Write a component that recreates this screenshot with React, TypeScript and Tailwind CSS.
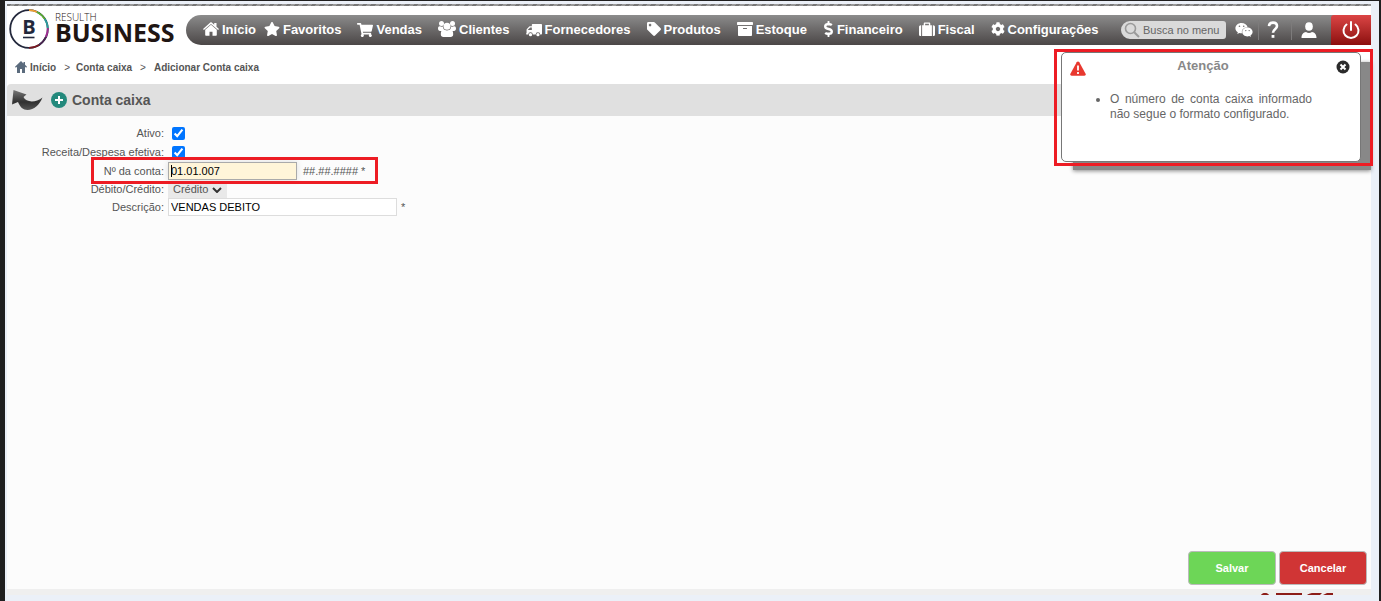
import React from 'react'
import { FaArchive, FaCog, FaDollarSign, FaShoppingCart, FaStar, FaTag, FaWeixin } from 'react-icons/fa'

interface IconProps {
  className?: string
}

const HomeIcon: React.FC<IconProps> = ({ className }) => (
  <svg viewBox="0 0 16 14" fill="currentColor" className={className}>
    <path d="M8 2.800l5.800 5V13c0 .5-.3.800-.8.800H9.500V9.800h-3v4H3c-.5 0-.8-.3-.8-.8V7.800z" />
    <path d="M7.300.6c.4-.4 1-.4 1.400 0l2.500 2.100V1h2.300v3.700L16 6.900l-.9 1.100L8 2 .9 8 0 6.900z" />
  </svg>
)

const ClientsIcon: React.FC<IconProps> = ({ className }) => (
  <svg viewBox="0 0 18 16" fill="currentColor" className={className}>
    <circle cx="3.500" cy="2.600" r="2.500" />
    <circle cx="14.500" cy="2.600" r="2.500" />
    <circle cx="9" cy="5.200" r="3.500" />
    <path d="M0 7.500C0 5.800 1 5 2 5.300c1 .5 2 .5 2.900.1 0 1.300.4 2.400 1.200 3.200L4 10H2C.8 10 0 9 0 7.500zM18 7.500c0-1.700-1-2.500-2-2.200-1 .5-2 .5-2.900.1 0 1.300-.4 2.400-1.200 3.200L14 10h2c1.200 0 2-1 2-2.500z" />
    <path d="M2.800 13.200c0-2.800.9-4.700 2.800-4.700 1 0 1.800.9 3.400.9s2.400-.9 3.400-.9c1.900 0 2.800 1.900 2.800 4.700 0 1.800-1 2.800-2.600 2.800H5.400c-1.600 0-2.600-1-2.600-2.800z" />
  </svg>
)

const TruckIcon: React.FC<IconProps> = ({ className }) => (
  <svg viewBox="0 0 17 14" fill="currentColor" className={className}>
    <path
      fillRule="evenodd"
      d="M7 .5h9.200c.5 0 .8.300.8.800v9.500c0 .6-.3.900-.9.900h-1a2.400 2.400 0 0 0-4.800 0H7.200a2.400 2.400 0 0 0-4.800 0H.7c-.4 0-.7-.3-.7-.7.5-.2.600-.5.600-1V7c0-.6.2-1 .6-1.400l2-2.100c.4-.4.8-.5 1.300-.5H6.200V1.300c0-.5.300-.8.800-.8zM2 7h4.200V4.300H4.500L2 6.800z"
    />
    <circle cx="4.800" cy="12" r="1.700" />
    <circle cx="12.700" cy="12" r="1.700" />
  </svg>
)

const SuitcaseIcon: React.FC<IconProps> = ({ className }) => (
  <svg viewBox="0 0 17 15" fill="currentColor" className={className}>
    <path d="M2.300 3v11.500h-.5C.8 14.500 0 13.700 0 12.700V4.800C0 3.800.8 3 1.800 3zM14.700 3v11.500h.5c1 0 1.800-.8 1.800-1.800V4.800c0-1-.8-1.800-1.800-1.800z" />
    <path fillRule="evenodd" d="M3.300 3H5V1.300C5 .6 5.600 0 6.300 0h4.400c.7 0 1.300.6 1.300 1.300V3h1.700v11.500H3.300zm3.200 0h4V1.500h-4z" />
  </svg>
)

const MENU = [
  { label: 'Início', icon: HomeIcon, iconClass: 'h-[14px] w-4 -mt-0.5' },
  { label: 'Favoritos', icon: FaStar, iconClass: 'h-4 w-4 -ml-2 -mt-0.5' },
  { label: 'Vendas', icon: FaShoppingCart, iconClass: 'h-4 w-4' },
  { label: 'Clientes', icon: ClientsIcon, iconClass: 'h-4 w-[18px] -mt-0.5' },
  { label: 'Fornecedores', icon: TruckIcon, iconClass: 'h-[14px] w-4' },
  { label: 'Produtos', icon: FaTag, iconClass: 'h-[14px] w-[14px] -mt-0.5' },
  { label: 'Estoque', icon: FaArchive, iconClass: 'h-4 w-4 -mt-0.5' },
  { label: 'Financeiro', icon: FaDollarSign, iconClass: 'h-4 w-[11px] -mt-0.5' },
  { label: 'Fiscal', icon: SuitcaseIcon, iconClass: 'h-[15px] w-4 -mt-0.5' },
  { label: 'Configurações', icon: FaCog, iconClass: 'h-[14px] w-[14px] -mt-0.5' },
]

const Logo: React.FC = () => (
  <a href="#" className="flex w-[179px] shrink-0 items-start gap-[6px] pl-0.5 text-[#1f1513]">
    <svg viewBox="0 0 40 40" className="h-10 w-10 shrink-0">
      <g fill="none" strokeWidth="1.800">
        <circle cx="20" cy="20" r="18.800" stroke="#23283c" />
        <path d="M20 1.200A18.800 18.800 0 0 1 28 3" stroke="#f0a030" />
        <path d="M28 3a18.800 18.800 0 0 1 7.800 7" stroke="#5cb531" />
        <path d="M35.800 10a18.800 18.800 0 0 1 3 9" stroke="#2a9fa0" />
        <path d="M38.800 19a18.800 18.800 0 0 1-2 9" stroke="#a02c91" />
        <path d="M36.800 28a18.800 18.800 0 0 1-6.800 8" stroke="#4a2450" />
        <path d="M30 36a18.800 18.800 0 0 1-10 2.800" stroke="#7a1a22" />
      </g>
      <text x="20" y="25" textAnchor="middle" fontFamily="Open Sans, sans-serif" fontWeight="700" fontSize="20" fill="#23283c">
        B
      </text>
      <path d="M14 28.500h11.500" stroke="#23283c" strokeWidth="1.600" />
    </svg>
    <span className="flex flex-col pt-[3px] font-['Open_Sans',sans-serif]">
      <span className="text-[10px] font-light leading-[10px]">RESULTH</span>
      <span className="text-[25px] font-bold leading-5">BUSINESS</span>
    </span>
  </a>
)

const Header: React.FC = () => (
  <header className="flex items-start pt-[3px]">
    <Logo />
    <div className="mt-[6px] flex h-[30px] flex-1 items-center rounded-l-[15px] bg-linear-to-b from-[#8c8c8c] to-[#4b4747] pl-[17px] text-white">
      <nav className="flex flex-1 items-center gap-4">
        {MENU.map(({ label, icon: Icon, iconClass }) => (
          <a key={label} href="#" className="flex items-center gap-[3px] text-[13px] font-bold leading-4">
            <Icon className={iconClass} />
            {label}
          </a>
        ))}
      </nav>
      <label className="flex h-[18px] w-[105px] items-center gap-[3px] rounded-l-[9px] rounded-r-[3px] bg-[#dadada] pl-[3px]">
        <svg viewBox="0 0 16 16" fill="none" stroke="#9a9a9a" className="h-4 w-4 shrink-0">
          <circle cx="6.500" cy="6.500" r="5" strokeWidth="1.600" />
          <path d="M10.200 10.200l4.800 4.800" strokeWidth="2" />
        </svg>
        <input
          type="text"
          aria-label="Busca no menu"
          placeholder="Busca no menu"
          className="w-full min-w-0 bg-transparent text-[11px] placeholder:text-[#666] outline-none"
        />
      </label>
      <button type="button" aria-label="Mensagens" className="flex h-5 w-[33px] items-center justify-center border-r border-[#7d7b7b] pl-1">
        <FaWeixin className="h-[18px] w-[18px]" />
      </button>
      <button type="button" aria-label="Ajuda" className="flex h-5 w-[33px] items-center justify-center border-r border-[#7d7b7b] pr-1">
        <svg viewBox="0 0 12 18" fill="none" stroke="currentColor" className="h-[18px] w-3">
          <path d="M2 5.200C2.200 2.800 3.800 1.600 6 1.600c2.400 0 4 1.400 4 3.500 0 3.200-4 3.200-4 6.700" strokeWidth="2.600" />
          <path d="M4.600 14h2.800v2.800H4.600z" fill="currentColor" stroke="none" />
        </svg>
      </button>
      <button type="button" aria-label="Usuário" className="flex h-5 w-[39px] items-center justify-center pr-[6px]">
        <svg viewBox="0 0 16 16" fill="currentColor" className="h-4 w-4">
          <ellipse cx="8" cy="4.500" rx="3.800" ry="4.300" />
          <path d="M.5 16c0-4 2-5.500 4.500-6 2 1.200 4 1.200 6 0 2.500.5 4.500 2 4.500 6z" />
        </svg>
      </button>
      <button
        type="button"
        aria-label="Sair"
        className="flex h-[30px] w-10 items-center justify-center rounded-tl-[3px] bg-linear-to-b from-[#dc4545] to-[#8c0d0d]"
      >
        <svg viewBox="0 0 18 18" fill="none" stroke="currentColor" strokeWidth="2" strokeLinecap="round" className="h-[18px] w-[18px]">
          <path d="M4.500 3.500a7.500 7.500 0 1 0 9 0" />
          <path d="M9 1v8" />
        </svg>
      </button>
    </div>
  </header>
)

const Breadcrumb: React.FC = () => (
  <nav className="mt-[9px] flex h-[18px] items-center pl-2 text-[10px] font-bold text-[#555]">
    <a href="#" className="flex items-center gap-[3px]">
      <svg viewBox="0 0 12 12" className="h-3 w-3">
        <path d="M6 0L0 5.800l.8.900L2 5.700V12h3V8h2v4h3V5.700l1.200 1 .8-.9L10 3.800V1H8.500v1.400z" fill="#5b6b7d" />
      </svg>
      Início
    </a>
    <span className="ml-2 font-normal">&gt;</span>
    <a href="#" className="ml-[6px]">Conta caixa</a>
    <span className="ml-2 font-normal">&gt;</span>
    <span className="ml-2">Adicionar Conta caixa</span>
  </nav>
)

const TitleBar: React.FC = () => (
  <div className="mt-2 flex h-8 items-center rounded-tl-[4px] bg-[#e0e0e0] pl-[5px]">
    <button type="button" aria-label="Voltar">
      <svg viewBox="0 0 31 22" className="block h-[22px] w-[31px]">
        <defs>
          <linearGradient id="back" x1="0" y1="0" x2="0" y2="1">
            <stop offset="0" stopColor="#777" />
            <stop offset=".6" stopColor="#303030" />
            <stop offset="1" stopColor="#555" />
          </linearGradient>
        </defs>
        <path d="M1.500 1L14.500 5.500 11.500 8c2.500 5.500 12 6 19 .5C27.500 16 22 21 15.500 21c-4.500 0-7.500-3-9.500-8L0 15.500z" fill="url(#back)" />
      </svg>
    </button>
    <svg viewBox="0 0 16 16" className="ml-2 h-4 w-4">
      <circle cx="8" cy="8" r="8" fill="#23897c" />
      <path d="M8 4v8M4 8h8" stroke="#fff" strokeWidth="2" />
    </svg>
    <h1 className="ml-[5px] text-[14px] font-bold text-[#555]">Conta caixa</h1>
  </div>
)

interface FieldProps {
  id: string
  label: string
  children: React.ReactNode
}

const Field: React.FC<FieldProps> = ({ id, label, children }) => (
  <div className="flex items-center gap-1">
    <label htmlFor={id} className="w-[157px] shrink-0 text-right">
      {label}
    </label>
    {children}
  </div>
)

const AccountForm: React.FC = () => (
  <form id="conta" className="grid auto-rows-[18px] gap-y-px pt-2 text-[11px] leading-[13px] text-[#555]">
    <Field id="ativo" label="Ativo:">
      <input id="ativo" type="checkbox" defaultChecked className="ml-1 h-[13px] w-[13px] accent-[#0075ff]" />
    </Field>
    <Field id="efetiva" label="Receita/Despesa efetiva:">
      <input id="efetiva" type="checkbox" defaultChecked className="ml-1 h-[13px] w-[13px] accent-[#0075ff]" />
    </Field>
    <div className="relative">
      <Field id="numero" label="Nº da conta:">
        <span className="relative">
          <input
            id="numero"
            type="text"
            defaultValue="01.01.007"
            className="block h-[18px] w-[129px] border border-[#aaa] bg-[#fff5d9] px-[2px] text-black shadow-[0_0_6px_#ddd] outline-none"
          />
          <span className="absolute left-[3px] top-[3px] h-3 w-px bg-black" />
        </span>
        <span className="ml-[2px]">##.##.#### *</span>
      </Field>
      <div className="pointer-events-none absolute -top-[5px] left-[84px] z-10 h-[27px] w-[287px] border-[3px] border-[#ed1c24]" />
    </div>
    <div className="-mt-px grid auto-rows-[18px]">
      <Field id="tipo" label="Débito/Crédito:">
        <span className="relative">
          <select id="tipo" className="block h-[17px] w-[59px] appearance-none bg-[#e9e9e9] pl-[5px] outline-none">
            <option>Crédito</option>
            <option>Débito</option>
          </select>
          <svg viewBox="0 0 10 6" fill="none" stroke="#333" strokeWidth="2" className="pointer-events-none absolute right-[5px] top-[6px] h-[6px] w-[10px]">
            <path d="M1 1l4 4 4-4" />
          </svg>
        </span>
      </Field>
      <Field id="descricao" label="Descrição:">
        <input
          id="descricao"
          type="text"
          defaultValue="VENDAS DEBITO"
          className="h-[18px] w-[229px] border border-[#ddd] bg-white px-[2px] text-black outline-none"
        />
        <span>*</span>
      </Field>
    </div>
  </form>
)

const WarningDialog: React.FC = () => (
  <div role="alertdialog" aria-labelledby="aviso" className="absolute right-[-2px] top-[45px] w-[319px] overflow-hidden border-[3px] border-[#ed1c24] pb-px pl-1">
    <div className="h-[110px] w-[300px] rounded-[5px] border border-[#777] bg-white text-[#666]">
      <div className="flex items-start px-2 pt-[6px]">
        <svg viewBox="0 0 16 15" className="mt-[2px] h-[15px] w-4">
          <path d="M8 .5c.6 0 1 .3 1.300.8l6.300 11.500c.5 1-.1 1.900-1.200 1.900H1.600c-1.100 0-1.700-.9-1.200-1.900L6.700 1.300C7 .8 7.400.5 8 .5z" fill="#e8382f" />
          <path d="M8 4.500v5M8 11v2" stroke="#fff" strokeWidth="1.800" />
        </svg>
        <h2 id="aviso" className="flex-1 pr-4 text-center text-[13px] font-bold leading-[14px] text-[#888]">
          Atenção
        </h2>
        <button type="button" aria-label="Fechar" className="mr-[2px] mt-px">
          <svg viewBox="0 0 14 14" className="block h-[14px] w-[14px]">
            <circle cx="7" cy="7" r="6.500" fill="#2b2b2b" />
            <path d="M4.500 4.500l5 5M9.500 4.500l-5 5" stroke="#fff" strokeWidth="2" />
          </svg>
        </button>
      </div>
      <ul className="mt-[16px] list-disc pl-[48px] pr-[48px] text-justify text-[12px] leading-[15px]">
        <li>O número de conta caixa informado não segue o formato configurado.</li>
      </ul>
    </div>
  </div>
)

const FooterBrand: React.FC = () => (
  <svg viewBox="0 0 72 3" fill="#8c1d18" className="h-[3px] w-[72px]">
    <path d="M0 3c1-1.500 2-2 4-2s3 .5 4 2zM15 1h26v2H15zM46 3c2-1.500 4-2 7-2h8l-2 2zM62 3l4-2h6v2z" />
  </svg>
)

export default function App() {
  return (
    <div className="flex min-h-screen flex-col border-l-[5px] border-r-2 border-t border-[#1f1f1f] bg-[#ebf0f8] pb-[6px] pl-[2px] pr-2 pt-[3px] font-['Liberation_Sans',Arial,sans-serif]">
      <div className="relative flex flex-1 flex-col bg-[#fcfcfc]">
        <div className="bg-white">
          <div className="h-[2px] bg-[repeating-linear-gradient(135deg,#777_0_3px,#999_3px_6px)]" />
          <Header />
          <Breadcrumb />
          <TitleBar />
        </div>
        <main className="flex flex-1 flex-col justify-between">
          <AccountForm />
          <div className="flex justify-end gap-[3px] p-1 text-[11px] font-bold text-white">
            <button type="submit" form="conta" className="h-[34px] w-[88px] rounded-[4px] border border-[#bbb] bg-[#6dd657]">
              Salvar
            </button>
            <button type="button" className="h-[34px] w-[88px] rounded-[4px] border border-[#bbb] bg-[#d03535]">
              Cancelar
            </button>
          </div>
        </main>
        {/* drop shadow sits behind the outlined warning */}
        <div className="absolute right-0 top-[58px] h-[108px] w-[298px] bg-[#888] shadow-[0_1px_4px_#888]" />
        <WarningDialog />
        <footer className="flex h-[6px] items-end justify-end bg-[#efefef] pr-[38px]">
          <FooterBrand />
        </footer>
      </div>
    </div>
  )
}
